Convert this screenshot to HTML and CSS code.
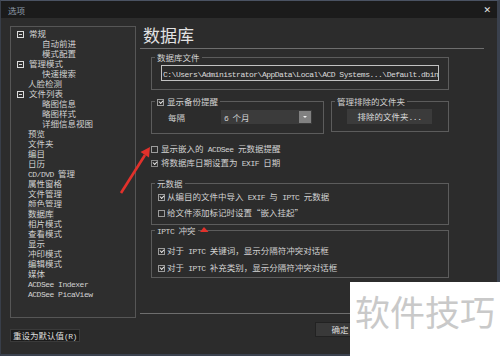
FILE: index.html
```html
<!DOCTYPE html>
<html lang="zh">
<head>
<meta charset="utf-8">
<title>选项</title>
<link rel="stylesheet" href="styles.css">
</head>
<body>
<div class="window">
  <div class="titlebar">
    <span class="title">选项</span>
    <span class="close">✕</span>
  </div>
  <div class="main">
    <div class="left">
      <div class="tree">
        <div class="row top"><span class="exp"></span>常规</div>
        <div class="row child">自动前进</div>
        <div class="row child">模式配置</div>
        <div class="row top"><span class="exp"></span>管理模式</div>
        <div class="row child">快速搜索</div>
        <div class="row leaf">人脸检测</div>
        <div class="row top"><span class="exp"></span>文件列表</div>
        <div class="row child">略图信息</div>
        <div class="row child">略图样式</div>
        <div class="row child">详细信息视图</div>
        <div class="row leaf">预览</div>
        <div class="row leaf">文件夹</div>
        <div class="row leaf">编目</div>
        <div class="row leaf">日历</div>
        <div class="row leaf"><span class="m">CD/DVD </span>管理</div>
        <div class="row leaf">属性窗格</div>
        <div class="row leaf">文件管理</div>
        <div class="row leaf">颜色管理</div>
        <div class="row leaf"><span class="sel">数据库</span></div>
        <div class="row leaf">相片模式</div>
        <div class="row leaf">查看模式</div>
        <div class="row leaf">显示</div>
        <div class="row leaf">冲印模式</div>
        <div class="row leaf">编辑模式</div>
        <div class="row leaf">媒体</div>
        <div class="row leaf"><span class="m">ACDSee Indexer</span></div>
        <div class="row leaf"><span class="m">ACDSee PicaView</span></div>
      </div>
      <div class="reset">重设为默认值<span class="m">(R)</span></div>
    </div>
    <div class="right">
      <div class="heading">数据库</div>
      <div class="rule"></div>
      <fieldset class="grp g1">
        <legend>数据库文件</legend>
        <div class="path"><span class="m">C:\Users\Administrator\AppData\Local\ACD Systems...\Default.dbin</span></div>
      </fieldset>
      <div class="pair">
        <fieldset class="grp g2">
          <legend><span class="cb on"></span>显示备份提醒</legend>
          <div class="every">
            <span class="lbl">每隔</span>
            <div class="select"><span class="val"><span class="m">6 </span>个月</span><span class="arrow"></span></div>
          </div>
        </fieldset>
        <fieldset class="grp g3">
          <legend>管理排除的文件夹</legend>
          <div class="btn excl">排除的文件夹<span class="m">...</span></div>
        </fieldset>
      </div>
      <div class="check first"><span class="cb"></span>显示嵌入的<span class="m"> ACDSee </span>元数据提醒</div>
      <div class="check"><span class="cb on dim"></span>将数据库日期设置为<span class="m"> EXIF </span>日期</div>
      <fieldset class="grp g4">
        <legend>元数据</legend>
        <div class="opt"><span class="cb on"></span>从编目的文件中导入<span class="m"> EXIF </span>与<span class="m"> IPTC </span>元数据</div>
        <div class="opt"><span class="cb"></span>给文件添加标记时设置“嵌入挂起”</div>
      </fieldset>
      <fieldset class="grp g5">
        <legend><span class="m">IPTC </span>冲突</legend>
        <div class="opt"><span class="cb on"></span>对于<span class="m"> IPTC </span>关键词，显示分隔符冲突对话框</div>
        <div class="opt"><span class="cb on"></span>对于<span class="m"> IPTC </span>补充类别，显示分隔符冲突对话框</div>
      </fieldset>
      <div class="rule bottom"></div>
      <div class="buttons">
        <div class="btn act">确定</div>
      </div>
    </div>
  </div>
</div>
<svg class="annot" width="500" height="356" viewBox="0 0 500 356">
  <line x1="121" y1="193" x2="145" y2="155" stroke="#e2312b" stroke-width="2.6"/>
  <polygon points="150,147 149,157.5 140.5,152" fill="#e2312b"/>
  <polygon points="204,227 200,232 208.5,232" fill="#e2312b"/>
</svg>
<div class="wm">软件技巧</div>
</body>
</html>
```

FILE: styles.css
```css
* { box-sizing: border-box; }
body {
  margin: 0;
  background: #2c2c2c;
  font-family: "Noto Sans CJK SC", sans-serif;
  font-size: 8.5px;
  color: #d2d2d2;
}
.m {
  font-family: "Liberation Mono", monospace;
  font-size: 8px;
  letter-spacing: -0.5px;
  white-space: pre;
}
.window {
  width: 500px;
  height: 356px;
  border-top: 1px solid #4a5262;
  border-left: 1px solid #383e49;
  border-right: 3px solid #3a414e;
  border-bottom: 2px solid #3a414e;
  background: #2c2c2c;
  display: flex;
  flex-direction: column;
  overflow: hidden;
}
.titlebar {
  height: 17px;
  flex: none;
  background: #1b1b1b;
  display: flex;
  align-items: center;
  justify-content: space-between;
  padding: 0 6px 0 7px;
  color: #8f9dac;
}
.close {
  color: #e6e6e6;
  font-family: "DejaVu Sans", sans-serif;
  font-size: 9px;
  font-weight: bold;
}
.main {
  flex: 1;
  display: flex;
  padding: 8px 0 0 9px;
}
.left {
  width: 126px;
  display: flex;
  flex-direction: column;
}
.tree {
  height: 292px;
  border: 1px solid #565656;
  padding-top: 1px;
  background: #2e2e2e;
}
.row {
  height: 10px;
  line-height: 10px;
  white-space: nowrap;
}
.row.top { padding-left: 6px; }
.row.leaf { padding-left: 17px; }
.row.child { padding-left: 31px; }
.exp {
  display: inline-block;
  width: 7px;
  height: 7px;
  border: 1px solid #dcdcdc;
  margin-right: 5px;
  position: relative;
  vertical-align: -1px;
}
.exp::after {
  content: "";
  position: absolute;
  left: 1px;
  right: 1px;
  top: 2px;
  height: 1px;
  background: #dcdcdc;
}
.sel { background: #3c3c3c; }
.reset {
  margin-top: 11px;
  align-self: flex-start;
  height: 13px;
  line-height: 11px;
  padding: 0 2px;
  background: #1b1b1b;
  border: 1px solid #3a3a3a;
  color: #dedede;
  white-space: nowrap;
}
.right {
  width: 344px;
  margin-left: 4px;
  display: flex;
  flex-direction: column;
}
.heading {
  font-size: 17px;
  line-height: 18px;
  height: 18px;
  padding-left: 3px;
  color: #e2e2e2;
}
.rule {
  height: 1px;
  background: #6e6e6e;
  margin-top: 4px;
  flex: none;
}
.grp {
  margin: 0 0 0 11px;
  padding: 0;
  border: 1px solid #5c5c5c;
  min-width: 0;
}
.grp legend {
  height: 10px;
  line-height: 10px;
  padding: 0 2px;
  margin-left: 3px;
  white-space: nowrap;
}
.g1 { width: 298px; margin-top: 3px; }
.path {
  margin: 3px 0 8px 9px;
  width: 278px;
  height: 16px;
  line-height: 14px;
  border: 1px solid #c2c2c2;
  background: #2a2a2a;
  color: #dcdcdc;
  padding-left: 1px;
  white-space: nowrap;
  overflow: hidden;
}
.pair {
  display: flex;
  align-items: flex-start;
  margin-top: 6px;
}
.g2 { width: 173px; }
.g3 { width: 118px; margin-left: 7px; }
.every {
  display: flex;
  align-items: center;
  margin: 4px 0 9px 16px;
}
.lbl { width: 53px; }
.select {
  width: 91px;
  height: 14px;
  background: #3b3b3b;
  display: flex;
  align-items: center;
  justify-content: space-between;
  padding-left: 3px;
}
.arrow {
  width: 12px;
  height: 12px;
  margin-right: 1px;
  background: #818181;
  position: relative;
}
.arrow::after {
  content: "";
  position: absolute;
  left: 4px;
  top: 5px;
  border-left: 2px solid transparent;
  border-right: 2px solid transparent;
  border-top: 2px solid #f0f0f0;
}
.btn {
  background: #3b3b3b;
  color: #dcdcdc;
  text-align: center;
  white-space: nowrap;
}
.excl {
  margin: 3px 0 7px 15px;
  width: 85px;
  height: 15px;
  line-height: 15px;
}
.cb {
  display: inline-block;
  width: 7px;
  height: 7px;
  border: 1px solid #9c9c9c;
  margin-right: 3px;
  position: relative;
  vertical-align: -1px;
}
.cb.on::after {
  content: "";
  position: absolute;
  left: 1px;
  top: 0px;
  width: 3px;
  height: 2px;
  border-left: 1px solid #e4e4e4;
  border-bottom: 1px solid #e4e4e4;
  transform: rotate(-45deg);
}
.cb.dim { border-color: #8a8a8a; }
.check {
  height: 14px;
  line-height: 14px;
  margin-left: 11px;
  white-space: nowrap;
}
.check.first { margin-top: 7px; }
.g4 { width: 298px; margin-top: 9px; padding-bottom: 4px; }
.g4 .opt { height: 16px; line-height: 16px; }
.g5 { width: 298px; margin-top: 0; padding: 7px 0 1px; }
.g5 .opt { height: 17px; line-height: 17px; }
.opt {
  padding-left: 6px;
  white-space: nowrap;
}
.opt .cb { margin-right: 2px; }
.rule.bottom { margin-top: 35px; }
.buttons {
  display: flex;
  margin-top: 8px;
  padding-left: 175px;
}
.act {
  width: 50px;
  height: 15px;
  line-height: 13px;
  border: 1px solid #222;
  background: #393939;
}
.annot {
  position: absolute;
  left: 0;
  top: 0;
  pointer-events: none;
}
.wm {
  position: absolute;
  left: 350px;
  top: 282px;
  width: 150px;
  height: 74px;
  background: #ffffff;
  color: #c9c9c9;
  font-size: 35px;
  line-height: 35px;
  padding: 11px 0 0 5px;
  white-space: nowrap;
}
```
